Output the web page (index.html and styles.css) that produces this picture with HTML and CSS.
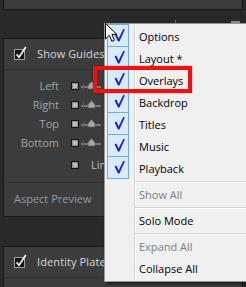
FILE: index.html
```html
<!DOCTYPE html>
<html>
<head>
<meta charset="utf-8">
<link rel="stylesheet" href="styles.css">
</head>
<body>
<div class="screen">
  <div class="top-panel"></div>
  <div class="gap-row"><span class="tick"></span><span class="knob"></span></div>

  <section class="panel">
    <div class="head-row">
      <svg class="big-cb" width="14" height="14" viewBox="0 0 14 14"><rect x="0.5" y="3.5" width="10" height="10" fill="#141414" stroke="#a0a0a0"/><path d="M2.6 8.2 L5 11.2 L11.8 1" fill="none" stroke="#f2f2f2" stroke-width="1.7"/></svg>
      <span class="head-label">Show Guides</span>
    </div>
    <div class="rows">
      <span class="lbl">Left</span><span class="sq"></span><svg class="slider" width="20" height="11" viewBox="0 0 20 11"><rect x="0" y="6" width="20" height="2" fill="#7a7a7a"/><rect x="2" y="3" width="1" height="7" fill="#555"/><path d="M10.5 1.5 L14 5.5 L14 9 L7 9 L7 5.5 Z" fill="#a6a6a6" stroke="#555" stroke-width="0.6"/></svg>
      <span class="lbl">Right</span><span class="sq"></span><svg class="slider" width="20" height="11" viewBox="0 0 20 11"><rect x="0" y="6" width="20" height="2" fill="#7a7a7a"/><rect x="2" y="3" width="1" height="7" fill="#555"/><path d="M10.5 1.5 L14 5.5 L14 9 L7 9 L7 5.5 Z" fill="#a6a6a6" stroke="#555" stroke-width="0.6"/></svg>
      <span class="lbl">Top</span><span class="sq"></span><svg class="slider" width="20" height="11" viewBox="0 0 20 11"><rect x="0" y="6" width="20" height="2" fill="#7a7a7a"/><rect x="2" y="3" width="1" height="7" fill="#555"/><path d="M10.5 1.5 L14 5.5 L14 9 L7 9 L7 5.5 Z" fill="#a6a6a6" stroke="#555" stroke-width="0.6"/></svg>
      <span class="lbl">Bottom</span><span class="sq"></span><svg class="slider" width="20" height="11" viewBox="0 0 20 11"><rect x="0" y="6" width="20" height="2" fill="#7a7a7a"/><rect x="2" y="3" width="1" height="7" fill="#555"/><path d="M10.5 1.5 L14 5.5 L14 9 L7 9 L7 5.5 Z" fill="#a6a6a6" stroke="#555" stroke-width="0.6"/></svg>
    </div>
    <div class="lines-row"><span class="sq"></span><span class="lines-label">Lines</span></div>
    <div class="aspect-row">Aspect Preview</div>
  </section>

  <section class="panel panel2">
    <div class="head-row">
      <svg class="big-cb" width="14" height="14" viewBox="0 0 14 14"><rect x="0.5" y="3.5" width="10" height="10" fill="#141414" stroke="#a0a0a0"/><path d="M2.6 8.2 L5 11.2 L11.8 1" fill="none" stroke="#f2f2f2" stroke-width="1.7"/></svg>
      <span class="head-label">Identity Plate</span>
    </div>
  </section>

  <div class="menu">
    <div class="item"><span class="box"><svg width="20" height="20" viewBox="0 0 20 20"><path d="M6.6 8.4 L8.4 7.6 L10.6 12.6 L15.4 2.8 L16.8 3.4 L11.4 15.4 L10 15.4 Z" fill="#1c1cd2"/></svg></span><span class="text">Options</span></div>
    <div class="item"><span class="box"><svg width="20" height="20" viewBox="0 0 20 20"><path d="M6.6 8.4 L8.4 7.6 L10.6 12.6 L15.4 2.8 L16.8 3.4 L11.4 15.4 L10 15.4 Z" fill="#1c1cd2"/></svg></span><span class="text">Layout *</span></div>
    <div class="item"><span class="box"><svg width="20" height="20" viewBox="0 0 20 20"><path d="M6.6 8.4 L8.4 7.6 L10.6 12.6 L15.4 2.8 L16.8 3.4 L11.4 15.4 L10 15.4 Z" fill="#1c1cd2"/></svg></span><span class="text">Overlays</span></div>
    <div class="item"><span class="box"><svg width="20" height="20" viewBox="0 0 20 20"><path d="M6.6 8.4 L8.4 7.6 L10.6 12.6 L15.4 2.8 L16.8 3.4 L11.4 15.4 L10 15.4 Z" fill="#1c1cd2"/></svg></span><span class="text">Backdrop</span></div>
    <div class="item"><span class="box"><svg width="20" height="20" viewBox="0 0 20 20"><path d="M6.6 8.4 L8.4 7.6 L10.6 12.6 L15.4 2.8 L16.8 3.4 L11.4 15.4 L10 15.4 Z" fill="#1c1cd2"/></svg></span><span class="text">Titles</span></div>
    <div class="item"><span class="box"><svg width="20" height="20" viewBox="0 0 20 20"><path d="M6.6 8.4 L8.4 7.6 L10.6 12.6 L15.4 2.8 L16.8 3.4 L11.4 15.4 L10 15.4 Z" fill="#1c1cd2"/></svg></span><span class="text">Music</span></div>
    <div class="item"><span class="box"><svg width="20" height="20" viewBox="0 0 20 20"><path d="M6.6 8.4 L8.4 7.6 L10.6 12.6 L15.4 2.8 L16.8 3.4 L11.4 15.4 L10 15.4 Z" fill="#1c1cd2"/></svg></span><span class="text">Playback</span></div>
    <div class="sep"></div>
    <div class="item disabled"><span class="text">Show All</span></div>
    <div class="sep"></div>
    <div class="item"><span class="text">Solo Mode</span></div>
    <div class="sep"></div>
    <div class="item disabled"><span class="text">Expand All</span></div>
    <div class="item"><span class="text">Collapse All</span></div>
  </div>

  <div class="highlight"></div>

  <svg class="cursor" width="13" height="20" viewBox="0 0 13 20"><path d="M0.5 0.5 L0.5 16 L4.3 12.3 L6.9 18.3 L9.4 17.2 L6.9 11.4 L11.8 11.4 Z" fill="#ffffff" stroke="#000000" stroke-width="1" stroke-linejoin="miter"/></svg>
</div>
</body>
</html>
```

FILE: styles.css
```css
html, body {
  margin: 0;
  padding: 0;
}
body {
  background: #292929;
  width: 246px;
  height: 287px;
  overflow: hidden;
  font-family: "Open Sans", "Noto Sans", sans-serif;
  font-size: 11px;
}
.screen {
  position: relative;
  width: 246px;
  height: 287px;
  overflow: hidden;
}
.top-panel {
  height: 9px;
  margin: 0 3px;
  background: #3b3b3b;
  border: 1px solid #161616;
  border-top: none;
}
.gap-row {
  height: 28px;
  display: flex;
  align-items: flex-start;
  justify-content: flex-end;
  padding-right: 6px;
}
.tick {
  width: 1px;
  height: 4px;
  margin-top: 10px;
  margin-right: 55px;
  background: #6a6a6a;
}
.knob {
  width: 9px;
  height: 4px;
  margin-top: 11px;
  background: #8c8c8c;
}
.panel {
  margin: 0 3px;
  background: #3c3c3c;
  border: 1px solid #1a1a1a;
}
.head-row {
  height: 30px;
  display: flex;
  align-items: center;
  padding-left: 10px;
  border-bottom: 1px solid #2f2f2f;
  color: #d4d6d8;
}
.big-cb {
  margin-top: -3px;
  margin-right: 9px;
}
.head-label {
  margin-top: -2px;
  letter-spacing: 0.1px;
}
.rows {
  display: grid;
  grid-template-columns: 55px 8px 20px;
  grid-auto-rows: 19px;
  column-gap: 0;
  align-items: center;
  margin-top: 6px;
  color: #9da6ae;
}
.lbl {
  text-align: right;
  margin-right: 0;
}
.sq {
  box-sizing: border-box;
  width: 8px;
  height: 8px;
  background: #bdbdbd;
  border: 1px solid #151515;
  box-shadow: inset 0 0 0 1px #8e8e8e;
}
.rows .sq {
  margin-left: 12px;
}
.rows {
  grid-template-columns: 55px 20px 20px;
}
.slider {
  margin-left: 2px;
}
.lines-row {
  height: 19px;
  margin-top: 3px;
  display: flex;
  align-items: center;
  padding-left: 67px;
  color: #b8c0c8;
}
.lines-label {
  margin-left: 12px;
}
.aspect-row {
  margin-top: 8px;
  border-top: 1px solid #2f2f2f;
  height: 33px;
  line-height: 31px;
  padding-left: 10px;
  color: #8f9ca8;
}
.panel2 {
  margin-top: 29px;
  height: 60px;
}
.menu {
  position: absolute;
  left: 104px;
  top: 23px;
  width: 160px;
  box-sizing: border-box;
  border: 1px solid #979797;
  padding: 1px 0 2px;
  background:
    linear-gradient(to right, transparent 29px, #d2d2d2 29px, #d2d2d2 30px, #ffffff 30px, #ffffff 31px, transparent 31px),
    #f0f0f0;
  box-shadow: 2px 2px 3px rgba(0, 0, 0, 0.55);
  color: #000;
  font-size: 11px;
}
.item {
  height: 22px;
  display: flex;
  align-items: center;
}
.box {
  box-sizing: border-box;
  width: 22px;
  height: 23px;
  margin-left: 2px;
  margin-top: -1px;
  align-self: flex-start;
  background: #d8ebfc;
  border: 1px solid #73a8e0;
  display: flex;
  align-items: center;
  justify-content: center;
}
.text {
  position: absolute;
  left: 34px;
}
.item {
  position: relative;
}
.disabled {
  color: #7d7d7d;
}
.sep {
  height: 4px;
  margin-left: 30px;
  box-sizing: border-box;
  padding-top: 2px;
}
.sep::after {
  content: "";
  display: block;
  height: 1px;
  background: #d2d2d2;
  border-bottom: 1px solid #fdfdfd;
}
.highlight {
  position: absolute;
  left: 93px;
  top: 66px;
  width: 99px;
  height: 27px;
  box-sizing: border-box;
  border: 4px solid #f01010;
  box-shadow: 0 0 2px rgba(0, 0, 0, 0.35);
}
.cursor {
  position: absolute;
  left: 105px;
  top: 23px;
}
```
